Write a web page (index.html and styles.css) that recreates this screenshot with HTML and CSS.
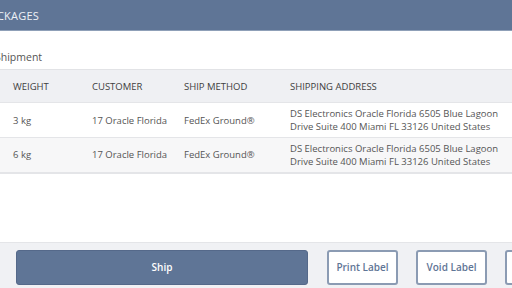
FILE: index.html
```html
<!DOCTYPE html>
<html lang="en">

<head>
  <meta charset="UTF-8">
  <meta name="viewport" content="width=device-width, initial-scale=1.0">
  <title>Packages</title>

  <link rel="stylesheet" href="styles.css">
</head>

<body>
  <header class="panel-head">
    <h2>PACKAGES</h2>
  </header>

  <section class="shipment">
    <h3>Shipment</h3>

    <table class="pkg-table">
      <thead>
        <tr>
          <th class="c-weight">Weight</th>
          <th class="c-customer">Customer</th>
          <th class="c-method">Ship Method</th>
          <th class="c-address">Shipping Address</th>
        </tr>
      </thead>
      <tbody>
        <tr>
          <td>3 kg</td>
          <td>17 Oracle Florida</td>
          <td>FedEx Ground®</td>
          <td>DS Electronics Oracle Florida 6505 Blue Lagoon Drive Suite 400 Miami FL 33126 United States</td>
        </tr>
        <tr class="alt">
          <td>6 kg</td>
          <td>17 Oracle Florida</td>
          <td>FedEx Ground®</td>
          <td>DS Electronics Oracle Florida 6505 Blue Lagoon Drive Suite 400 Miami FL 33126 United States</td>
        </tr>
      </tbody>
    </table>
  </section>

  <footer class="actions">
    <button class="btn btn-main">Ship</button>
    <button class="btn btn-line">Print Label</button>
    <button class="btn btn-line">Void Label</button>
    <button class="btn btn-line">Cancel</button>
  </footer>
</body>

</html>
```

FILE: styles.css
```css
* {
  margin: 0;
  padding: 0;
  box-sizing: border-box;
}

body {
  width: 512px;
  height: 288px;
  overflow: hidden;
  display: flex;
  flex-direction: column;
  background: #ffffff;
  font-family: "Open Sans", "Liberation Sans", sans-serif;
  color: #4a4a4a;
}

/* 상단 제목 */
.panel-head {
  height: 31px;
  background: #5f7596;
  border-bottom: 1px solid #8fa0b8;
  display: flex;
  align-items: center;
}

.panel-head h2 {
  margin-left: -17px;
  font-size: 11px;
  font-weight: 400;
  color: #eef1f6;
  letter-spacing: 0.2px;
}

.shipment {
  flex: 1;
}

.shipment h3 {
  margin: 19px 0 0 -5px;
  height: 19px;
  font-size: 10.5px;
  font-weight: 400;
  color: #555555;
}

/* 표 */
.pkg-table {
  width: 512px;
  border-collapse: collapse;
  table-layout: fixed;
  font-size: 9.5px;
}

.pkg-table th {
  height: 33px;
  background: #eff0f3;
  border-top: 1px solid #e2e3e6;
  text-align: left;
  font-weight: 400;
  text-transform: uppercase;
  color: #3e3e3e;
  padding-left: 13px;
}

.pkg-table td {
  height: 35px;
  padding: 3px 0 3px 13px;
  border-top: 1px solid #e4e5e8;
  line-height: 13px;
  color: #555555;
}

.pkg-table tbody tr:last-child td {
  border-bottom: 2px solid #e4e5e8;
}

.pkg-table tr.alt td {
  background: #f7f7f8;
}

.c-weight { width: 79px; }
.c-customer { width: 92px; }
.c-method { width: 106px; }

/* 하단 버튼 */
.actions {
  height: 46px;
  background: #f0f1f4;
  border-top: 1px solid #e4e5e8;
  display: flex;
  align-items: center;
  gap: 18px;
  padding: 3px 0 0 16px;
}

.btn {
  height: 35px;
  flex-shrink: 0;
  border-radius: 3px;
  font-family: "Open Sans", "Liberation Sans", sans-serif;
  font-size: 10px;
  cursor: pointer;
}

.btn-main {
  width: 292px;
  margin-right: 1px;
  background: #5f7596;
  border: 1px solid #55698a;
  color: #ffffff;
  font-weight: 600;
}

.btn-line {
  width: 71px;
  background: #ffffff;
  border: 2px solid #8b9bb3;
  color: #5f7596;
  font-weight: 600;
}
```
